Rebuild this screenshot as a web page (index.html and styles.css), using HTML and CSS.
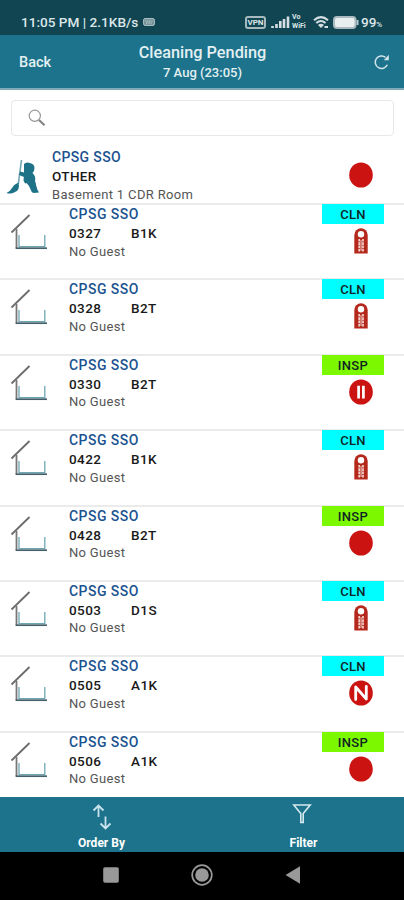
FILE: index.html
```html
<!DOCTYPE html>
<html lang="en">
<head>
    <meta charset="UTF-8">
    <meta name="viewport" content="width=device-width, initial-scale=1.0">
    <title>Cleaning Pending</title>
    <link rel="stylesheet" href="styles.css">
</head>
<body>
    <!-- Shared icons -->
    <svg class="icon-defs" width="0" height="0">
        <symbol id="house" viewBox="0 0 40 40">
            <path d="M2.5 20.5L20.5 3" stroke="#6b6b6b" stroke-width="1.8" fill="none"/>
            <path d="M7.5 17V36" stroke="#777" stroke-width="1.8"/>
            <path d="M10 23V34.7H35.8V23" stroke="#6da6b5" stroke-width="1.3" fill="none"/>
            <path d="M6.6 36.2H38" stroke="#46606a" stroke-width="1.7"/>
        </symbol>
        <symbol id="hanger" viewBox="0 0 14 26">
            <path d="M.3 25.5V7a6.7 6.7 0 0 1 13.4 0V25.5Z" fill="#b5281c"/>
            <circle cx="7" cy="6.3" r="3.2" fill="#fff"/>
            <path d="M5.2 11V23.5M9 11V23.5" stroke="#f3d5d0" stroke-width="1.7" stroke-dasharray="2.6 .7"/>
            <path d="M7.1 12V23" stroke="#df9c94" stroke-width="1.5"/>
        </symbol>
        <symbol id="dot" viewBox="0 0 24 26">
            <ellipse cx="12" cy="13" rx="11.8" ry="12.6" fill="#cb1312"/>
        </symbol>
        <symbol id="pause" viewBox="0 0 24 26">
            <ellipse cx="12" cy="13" rx="11.8" ry="12.6" fill="#cb1312"/>
            <path d="M9.6 6.7V19.5M14.4 6.7V19.5" stroke="#fff" stroke-width="2.7"/>
        </symbol>
        <symbol id="new" viewBox="0 0 24 26">
            <ellipse cx="12" cy="13" rx="11.8" ry="12.6" fill="#cb1312"/>
            <path d="M6.7 19.5V7L17.3 19V6.5" stroke="#fff" stroke-width="2.8" fill="none" stroke-linejoin="round" stroke-linecap="round"/>
        </symbol>
    </svg>

    <div class="phone">
        <div class="status-bar">
            <span class="status-time">11:05 PM | 2.1KB/s</span>
            <svg class="chip-icon" width="12" height="8" viewBox="0 0 12 8"><rect x=".6" y=".6" width="10.8" height="6.8" rx="1.5" fill="#6f8f96" stroke="#b7c8cc"/><path d="M2.5 3H9.5M3 5H9" stroke="#d2dddf" stroke-dasharray="1 .6"/></svg>
            <div class="status-right">
                <span class="vpn">VPN</span>
                <svg class="signal" width="19" height="12" viewBox="0 0 19 12"><path d="M1.5 12V10M5.5 12V8M9.3 12V5M13 12V3M17 12V.5" stroke="#d3dfe2" stroke-width="2.6"/></svg>
                <div class="vowifi"><span>Vo</span><span>WiFi</span></div>
                <svg class="wifi" width="16" height="13" viewBox="0 0 16 13"><path d="M1 4.2Q8-1.8 15 4.2M3.3 7Q8 3 12.5 7" stroke="#d3dfe2" stroke-width="2.1" fill="none"/><path d="M5 9Q8 6.3 11 9L8 12Z" fill="#d3dfe2"/><path d="M11.5 11H15" stroke="#d3dfe2" stroke-width="2"/></svg>
                <svg class="battery" width="26" height="13" viewBox="0 0 26 13"><rect x="1" y="1" width="21.5" height="11" rx="3" fill="#e9eeef" stroke="#a9bbc0" stroke-width="2"/><path d="M24.5 4V9" stroke="#b9c8cc" stroke-width="2"/></svg>
                <span class="percent">99<small>%</small></span>
            </div>
        </div>

        <div class="header">
            <a href="#" class="back">Back</a>
            <div class="title">
                <h1>Cleaning Pending</h1>
                <p>7 Aug (23:05)</p>
            </div>
            <svg class="refresh" width="17" height="17" viewBox="0 0 17 17"><path d="M12.5 3.3A6.3 6.3 0 1 0 14.3 10.8" stroke="#d3e5ea" stroke-width="1.5" fill="none"/><path d="M15.8.8V6.3H10.8Z" fill="#d3e5ea"/></svg>
        </div>

        <div class="search-box">
            <svg width="18" height="18" viewBox="0 0 18 18"><circle cx="6.8" cy="6.8" r="5.6" stroke="#999" stroke-width="1.2" fill="none"/><path d="M11 11L16.5 16.3" stroke="#858585" stroke-width="2.2"/></svg>
        </div>

        <div class="list">
            <div class="row row-other">
                <svg class="cleaner" width="34" height="37" viewBox="0 0 34 37">
                    <path d="M15.5 1L12.3 25" stroke="#6fa6b5" stroke-width="1.6"/>
                    <path d="M12.5 23.5Q14.3 31 9 33Q5 35.5 .5 34Q4 32.5 6 29Q8.5 25 12.5 23.5Z" fill="#1d7288"/>
                    <path d="M18 5Q20 2.5 24 4Q28.5 5 28.5 9Q28.5 12 26.5 14Q30 17 29 22L30.5 29L33 33.5L27.5 34L25 26.5L24.500 23L19.500 24.500Q16.5 22 18 18L13 16L14 12.500L18 13.500Z" fill="#1d7288"/>
                    <path d="M19 22H29L31 30L29 33.500H26L23 27Z" fill="#1d7288"/>
                </svg>
                <div class="info">
                    <h2>CPSG SSO</h2>
                    <p class="room">OTHER</p>
                    <p class="guest">Basement 1 CDR Room</p>
                </div>
                <div class="state"><svg class="mark"><use href="#dot"/></svg></div>
            </div>
            <div class="row">
                <svg class="house"><use href="#house"/></svg>
                <div class="info">
                    <h2>CPSG SSO</h2>
                    <p class="room"><span>0327</span>B1K</p>
                    <p class="guest">No Guest</p>
                </div>
                <div class="state"><span class="tag cln">CLN</span><svg class="mark"><use href="#hanger"/></svg></div>
            </div>
            <div class="row">
                <svg class="house"><use href="#house"/></svg>
                <div class="info">
                    <h2>CPSG SSO</h2>
                    <p class="room"><span>0328</span>B2T</p>
                    <p class="guest">No Guest</p>
                </div>
                <div class="state"><span class="tag cln">CLN</span><svg class="mark"><use href="#hanger"/></svg></div>
            </div>
            <div class="row">
                <svg class="house"><use href="#house"/></svg>
                <div class="info">
                    <h2>CPSG SSO</h2>
                    <p class="room"><span>0330</span>B2T</p>
                    <p class="guest">No Guest</p>
                </div>
                <div class="state"><span class="tag insp">INSP</span><svg class="mark"><use href="#pause"/></svg></div>
            </div>
            <div class="row">
                <svg class="house"><use href="#house"/></svg>
                <div class="info">
                    <h2>CPSG SSO</h2>
                    <p class="room"><span>0422</span>B1K</p>
                    <p class="guest">No Guest</p>
                </div>
                <div class="state"><span class="tag cln">CLN</span><svg class="mark"><use href="#hanger"/></svg></div>
            </div>
            <div class="row">
                <svg class="house"><use href="#house"/></svg>
                <div class="info">
                    <h2>CPSG SSO</h2>
                    <p class="room"><span>0428</span>B2T</p>
                    <p class="guest">No Guest</p>
                </div>
                <div class="state"><span class="tag insp">INSP</span><svg class="mark"><use href="#dot"/></svg></div>
            </div>
            <div class="row">
                <svg class="house"><use href="#house"/></svg>
                <div class="info">
                    <h2>CPSG SSO</h2>
                    <p class="room"><span>0503</span>D1S</p>
                    <p class="guest">No Guest</p>
                </div>
                <div class="state"><span class="tag cln">CLN</span><svg class="mark"><use href="#hanger"/></svg></div>
            </div>
            <div class="row">
                <svg class="house"><use href="#house"/></svg>
                <div class="info">
                    <h2>CPSG SSO</h2>
                    <p class="room"><span>0505</span>A1K</p>
                    <p class="guest">No Guest</p>
                </div>
                <div class="state"><span class="tag cln">CLN</span><svg class="mark"><use href="#new"/></svg></div>
            </div>
            <div class="row">
                <svg class="house"><use href="#house"/></svg>
                <div class="info">
                    <h2>CPSG SSO</h2>
                    <p class="room"><span>0506</span>A1K</p>
                    <p class="guest">No Guest</p>
                </div>
                <div class="state"><span class="tag insp">INSP</span><svg class="mark"><use href="#dot"/></svg></div>
            </div>
        </div>

        <div class="toolbar">
            <a href="#" class="tool">
                <svg width="20" height="26" viewBox="0 0 20 26"><path d="M6.5 13V2M1.5 6.5L6.5 1.5L11.5 6.5M13.5 12.5V24M8.5 19.5L13.5 24.5L18.500 19.5" stroke="#c9e4ed" stroke-width="1.8" fill="none"/></svg>
                <span>Order By</span>
            </a>
            <a href="#" class="tool filter">
                <svg width="20" height="26" viewBox="0 0 20 26"><path d="M1.8 1H18.2L11.2 9.5V18.5H8.8V9.5Z" stroke="#d5e9ef" stroke-width="1.6" fill="none"/></svg>
                <span>Filter</span>
            </a>
        </div>

        <!-- Android navigation -->
        <div class="nav-bar">
            <svg width="16" height="16" viewBox="0 0 16 16"><rect x=".2" y=".2" width="15.6" height="15.6" rx="1.8" fill="#999"/></svg>
            <svg width="22" height="22" viewBox="0 0 22 22"><circle cx="11" cy="11" r="9.8" stroke="#999" stroke-width="1.7" fill="none"/><circle cx="11" cy="11" r="6.8" fill="#999"/></svg>
            <svg width="16" height="18" viewBox="0 0 16 18"><path d="M.5 9L15 .3V17.7Z" fill="#999"/></svg>
        </div>
    </div>
</body>
</html>
```

FILE: styles.css
```css
* {
    margin: 0;
    padding: 0;
    box-sizing: border-box;
    font-family: Roboto, Arial, sans-serif;
}
body {
    background: #fff;
}
a {
    color: inherit;
    text-decoration: none;
}
svg {
    display: block;
    flex-shrink: 0;
}
.icon-defs {
    display: none;
}
.phone {
    display: flex;
    flex-direction: column;
    width: 404px;
    height: 900px;
    overflow: hidden;
}
.status-bar {
    display: flex;
    align-items: center;
    height: 35px;
    padding: 9px 20px 0 21px;
    background: #124552;
    color: #dce7e9;
    flex-shrink: 0;
}
.status-time {
    width: 119px;
    font-size: 13.6px;
    font-weight: 500;
    white-space: nowrap;
}
.chip-icon {
    margin-left: 3px;
}
.status-right {
    display: flex;
    align-items: center;
    margin-left: auto;
}
.vpn {
    width: 21px;
    height: 13px;
    border: 2px solid #a5b9be;
    border-radius: 3px;
    font-size: 8px;
    font-weight: 700;
    line-height: 9px;
    text-align: center;
}
.signal {
    margin-left: 5px;
}
.vowifi {
    display: flex;
    flex-direction: column;
    width: 17px;
    margin-left: 2px;
    font-size: 7px;
    font-weight: 700;
    line-height: 9px;
}
.wifi {
    margin-left: 4px;
}
.battery {
    margin-left: 4px;
}
.percent {
    width: 23px;
    margin-left: 2px;
    font-size: 13.5px;
    font-weight: 500;
    white-space: nowrap;
}
.percent small {
    font-size: 8px;
}
.header {
    display: grid;
    grid-template-columns: 80px 1fr 80px;
    align-items: center;
    height: 55px;
    background: #1c738b;
    border-bottom: 2px solid #7fabb8;
    color: #e3f0f3;
    flex-shrink: 0;
}
.back {
    padding: 2px 0 0 19px;
    font-size: 14.5px;
    font-weight: 500;
}
.title {
    padding-left: 1px;
    padding-top: 2px;
    text-align: center;
}
.title h1 {
    font-size: 16.3px;
    font-weight: 500;
    line-height: 20px;
}
.title p {
    font-size: 13px;
    font-weight: 500;
    line-height: 19px;
}
.refresh {
    margin: 2px 0 0 49px;
}
.search-box {
    display: flex;
    align-items: center;
    height: 36px;
    margin: 10px 10px 11px 11px;
    padding-left: 16px;
    border: 1px solid #e8e8e8;
    border-radius: 4px;
    flex-shrink: 0;
}
.list {
    flex: 1;
    min-height: 0;
    overflow: hidden;
}
.row {
    display: flex;
    height: 75.4px;
    padding-left: 9px;
    border-top: 2px solid #ebebeb;
}
.house {
    width: 40px;
    height: 40px;
    margin-top: 7px;
}
.info {
    flex: 1;
    margin-left: 20px;
    letter-spacing: 0.45px;
}
.info h2 {
    color: #1b5390;
    font-size: 14px;
    font-weight: 500;
    line-height: 19px;
}
.room {
    color: #191919;
    font-size: 13.5px;
    font-weight: 500;
    line-height: 18.5px;
}
.room span {
    display: inline-block;
    width: 62px;
}
.guest {
    color: #555;
    font-size: 13px;
    line-height: 18.5px;
}
.row:not(.row-other) .guest {
    letter-spacing: 0.3px;
}
.state {
    display: flex;
    flex-direction: column;
    align-items: center;
    width: 82px;
    padding-right: 4px;
}
.tag {
    width: 62px;
    height: 20px;
    margin-top: -1px;
    margin-right: 16px;
    color: #102424;
    font-size: 13px;
    font-weight: 500;
    line-height: 21px;
    letter-spacing: 0.3px;
    text-align: center;
}
.cln {
    background: #00fdff;
}
.insp {
    background: #7cf900;
}
.mark {
    width: 24px;
    height: 26px;
    margin-top: 4px;
}
.row-other {
    height: 56px;
    padding-left: 6px;
    border-top: none;
}
.row-other .cleaner {
    margin-top: 12px;
}
.row-other .info {
    margin-top: 1px;
    margin-left: 12px;
    letter-spacing: 0.35px;
}
.row-other .mark {
    margin-top: 15px;
}
.toolbar {
    display: grid;
    grid-template-columns: 1fr 1fr;
    height: 55px;
    background: #1c738b;
    color: #fff;
    flex-shrink: 0;
}
.tool {
    display: flex;
    flex-direction: column;
    align-items: center;
    padding: 7px 0 0 1px;
    font-size: 12px;
    font-weight: 700;
}
.filter svg {
    margin-right: 4px;
}
.tool span {
    margin-top: 6px;
}
.nav-bar {
    display: flex;
    align-items: center;
    gap: 72px;
    height: 48px;
    padding: 0 0 2px 103px;
    background: #000;
    flex-shrink: 0;
}
```
